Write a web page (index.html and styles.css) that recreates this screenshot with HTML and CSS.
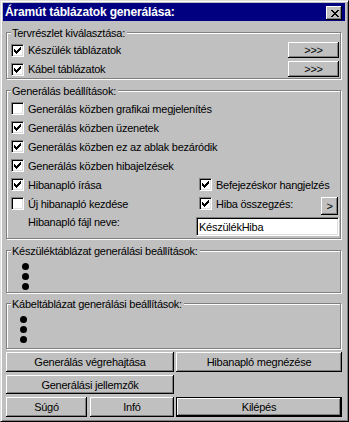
FILE: index.html
```html
<!DOCTYPE html>
<html lang="hu">

<head>
    <meta charset="UTF-8">
    <meta name="viewport" content="width=device-width, initial-scale=1.0">
    <title>Áramút táblázatok generálása</title>
    <link rel="stylesheet" href="styles.css">
</head>

<body>
    <!-- Ikonok -->
    <svg class="rejtett">
        <symbol id="pipa" viewBox="0 0 7 7">
            <path d="M6 0h1v1h-1z M5 1h2v1h-2z M0 2h1v1h-1z M4 2h3v1h-3z M0 3h2v1h-2z M3 3h3v1h-3z M0 4h5v1h-5z M1 5h3v1h-3z M2 6h1v1h-1z"/>
        </symbol>
        <symbol id="x-jel" viewBox="0 0 8 7">
            <path d="M0 0h2v1h-2z M6 0h2v1h-2z M1 1h2v1h-2z M5 1h2v1h-2z M2 2h4v1h-4z M3 3h2v1h-2z M2 4h4v1h-4z M1 5h2v1h-2z M5 5h2v1h-2z M0 6h2v1h-2z M6 6h2v1h-2z"/>
        </symbol>
    </svg>

    <div class="ablak">
        <!-- Címsor -->
        <div class="cimsor">
            <span class="cim">Áramút táblázatok generálása:</span>
            <span class="bezar"><svg width="8" height="7"><use href="#x-jel"/></svg></span>
        </div>

        <div class="tartalom">
            <!-- Tervrészlet -->
            <div class="csoport csoport-terv">
                <div class="csoport-cim">Tervrészlet kiválasztása:</div>
                <div class="sor">
                    <span class="jelolo"><span class="doboz"><svg width="7" height="7"><use href="#pipa"/></svg></span>Készülék táblázatok</span>
                    <button class="gomb gomb-tovabb">&gt;&gt;&gt;</button>
                </div>
                <div class="sor">
                    <span class="jelolo"><span class="doboz"><svg width="7" height="7"><use href="#pipa"/></svg></span>Kábel táblázatok</span>
                    <button class="gomb gomb-tovabb">&gt;&gt;&gt;</button>
                </div>
            </div>

            <!-- Beállítások -->
            <div class="csoport csoport-beall">
                <div class="csoport-cim">Generálás beállítások:</div>
                <div class="sor">
                    <span class="jelolo"><span class="doboz"></span>Generálás közben grafikai megjelenítés</span>
                </div>
                <div class="sor">
                    <span class="jelolo"><span class="doboz"><svg width="7" height="7"><use href="#pipa"/></svg></span>Generálás közben üzenetek</span>
                </div>
                <div class="sor">
                    <span class="jelolo"><span class="doboz"><svg width="7" height="7"><use href="#pipa"/></svg></span>Generálás közben ez az ablak bezáródik</span>
                </div>
                <div class="sor">
                    <span class="jelolo"><span class="doboz"><svg width="7" height="7"><use href="#pipa"/></svg></span>Generálás közben hibajelzések</span>
                </div>
                <div class="sor sor-ket">
                    <span class="jelolo"><span class="doboz"><svg width="7" height="7"><use href="#pipa"/></svg></span>Hibanapló írása</span>
                    <span class="jelolo"><span class="doboz"><svg width="7" height="7"><use href="#pipa"/></svg></span>Befejezéskor hangjelzés</span>
                </div>
                <div class="sor sor-ket">
                    <span class="jelolo"><span class="doboz"></span>Új hibanapló kezdése</span>
                    <span class="osszegzes">
                        <span class="jelolo"><span class="doboz"><svg width="7" height="7"><use href="#pipa"/></svg></span>Hiba összegzés:</span>
                        <button class="gomb gomb-kicsi">&gt;</button>
                    </span>
                </div>
                <div class="sor-fajl">
                    <span class="fajl-cimke">Hibanapló fájl neve:</span>
                    <input class="mezo" type="text" value="KészülékHiba">
                </div>
            </div>

            <!-- Készüléktáblázat -->
            <div class="csoport csoport-keszulek">
                <div class="csoport-cim">Készüléktáblázat generálási beállítások:</div>
                <div class="pontok">
                    <span class="pont"></span>
                    <span class="pont"></span>
                    <span class="pont"></span>
                </div>
            </div>

            <!-- Kábeltáblázat -->
            <div class="csoport csoport-kabel">
                <div class="csoport-cim">Kábeltáblázat generálási beállítások:</div>
                <div class="pontok">
                    <span class="pont"></span>
                    <span class="pont"></span>
                    <span class="pont"></span>
                </div>
            </div>

            <!-- Gombok -->
            <div class="gombok">
                <button class="gomb">Generálás végrehajtása</button>
                <button class="gomb">Hibanapló megnézése</button>
                <button class="gomb">Generálási jellemzők</button>
                <span></span>
                <div class="gombok-also">
                    <button class="gomb">Súgó</button>
                    <button class="gomb">Infó</button>
                </div>
                <button class="gomb gomb-alap">Kilépés</button>
            </div>
        </div>
    </div>
</body>

</html>
```

FILE: styles.css
```css
/* Általános */

body {
    margin: 0;
    background-color: #c0c0c0;
    font-family: "Liberation Sans", Arial, sans-serif;
    font-size: 11px;
    letter-spacing: -0.25px;
    color: #000;
}

.rejtett {
    display: none;
}

/* Ablak keret */

.ablak {
    width: 349px;
    height: 422px;
    box-sizing: border-box;
    border: 1px solid;
    border-color: #dfdfdf #000 #000 #dfdfdf;
    box-shadow: inset 1px 1px #fff, inset -1px -1px #808080;
    padding: 2px 3px 2px 2px;
    background-color: #c0c0c0;
    display: flex;
    flex-direction: column;
}

/* Címsor */

.cimsor {
    height: 18px;
    flex: none;
    background-color: #000080;
    color: #fff;
    display: flex;
    justify-content: space-between;
    align-items: center;
    padding: 0 3px 0 2px;
}

.cim {
    font-weight: bold;
    font-size: 12px;
    letter-spacing: -0.15px;
}

.bezar {
    align-self: flex-start;
    margin-top: 3px;
    width: 16px;
    height: 14px;
    box-sizing: border-box;
    background-color: #c0c0c0;
    box-shadow: inset -1px -1px #000, inset 1px 1px #fff, inset -2px -2px #808080;
    display: flex;
    align-items: center;
    justify-content: center;
    padding-left: 1px;
}

/* Tartalom */

.tartalom {
    padding: 0 3px;
}

.csoport {
    border: 1px solid #808080;
    box-shadow: inset 1px 1px #fff, 1px 1px #fff;
    margin-right: 1px;
    padding: 0 1px 0 4px;
}

.csoport-cim {
    margin: -6px 0 0 0;
    line-height: 13px;
    width: max-content;
    padding: 0 2px 0 1px;
    background-color: #c0c0c0;
}

.csoport-terv {
    margin-top: 11px;
    padding-bottom: 1px;
}

.csoport-terv .csoport-cim {
    margin-bottom: 2px;
}

.csoport-terv .sor {
    height: 16px;
}

.csoport-terv .sor + .sor {
    margin-top: 3px;
}

.csoport-beall {
    margin-top: 11px;
    padding-bottom: 2px;
}

.csoport-beall .csoport-cim {
    margin-bottom: 1px;
}

.csoport-keszulek {
    margin-top: 11px;
    padding-bottom: 2px;
}

.csoport-kabel {
    margin-top: 10px;
    padding-bottom: 5px;
}

/* Sorok, jelölőnégyzetek */

.sor {
    height: 19px;
    display: flex;
    justify-content: space-between;
    align-items: center;
}

.sor-ket {
    display: grid;
    grid-template-columns: 188px 1fr;
}

.jelolo {
    display: flex;
    align-items: center;
    gap: 4px;
    white-space: nowrap;
}

.doboz {
    width: 13px;
    height: 13px;
    box-sizing: border-box;
    background-color: #fff;
    border: 1px solid;
    border-color: #808080 #fff #fff #808080;
    box-shadow: inset 1px 1px #000, inset -1px -1px #dfdfdf;
    padding: 2px;
    display: flex;
}

.doboz svg {
    fill: #000;
}

.osszegzes {
    display: flex;
    justify-content: space-between;
    height: 19px;
    align-items: center;
}

.sor-fajl {
    display: grid;
    grid-template-columns: 188px 1fr;
    align-items: start;
}

.fajl-cimke {
    line-height: 19px;
    padding-left: 17px;
}

.mezo {
    margin: 4px 0 0 -3px;
    height: 19px;
    box-sizing: border-box;
    border: 1px solid;
    border-color: #808080 #fff #fff #808080;
    box-shadow: inset 1px 1px #000, inset -1px -1px #dfdfdf;
    background-color: #fff;
    padding: 0 0 0 2px;
    font: inherit;
    letter-spacing: inherit;
    color: #000;
    outline: none;
    width: calc(100% + 3px);
}

/* Pontok */

.pontok {
    display: flex;
    flex-direction: column;
    gap: 3px;
    margin-top: 5px;
    padding-left: 11px;
}

.csoport-kabel .pontok {
    padding-left: 9px;
}

.pont {
    width: 7px;
    height: 7px;
    border-radius: 50%;
    background-color: #000;
}

/* Gombok */

.gomb {
    font: inherit;
    letter-spacing: inherit;
    color: #000;
    background-color: #c0c0c0;
    border: 0;
    padding: 0;
    margin: 0;
    box-shadow: inset -1px -1px #000, inset 1px 1px #fff, inset -2px -2px #808080;
}

.gomb-tovabb {
    width: 51px;
    height: 16px;
}

.gomb-kicsi {
    width: 17px;
    height: 18px;
    align-self: flex-start;
    margin: 3px 1px 0 0;
}

.gomb-alap {
    border: 1px solid #000;
}

.gombok {
    margin-top: 3px;
    display: grid;
    grid-template-columns: 168px 1fr;
    grid-template-rows: 20px 19px 20px;
    column-gap: 2px;
    row-gap: 3px;
}

.gombok-also {
    display: grid;
    grid-template-columns: 81px 1fr;
    column-gap: 3px;
}
```
